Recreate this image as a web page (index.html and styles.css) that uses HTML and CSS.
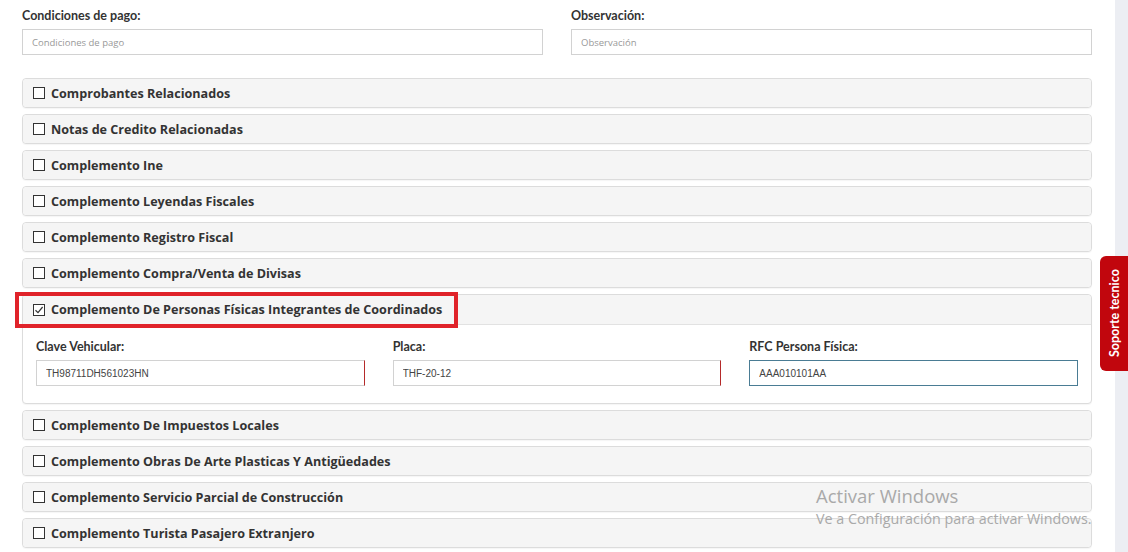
FILE: index.html
```html
<!DOCTYPE html>
<html lang="es">
  <head>
    <meta charset="UTF-8" />
    <title>Complementos</title>
    <link rel="stylesheet" href="styles.css">
  </head>
  <body>
    <div class="page">
      <!-- Payment terms / notes -->
      <div class="row-two">
        <div class="field">
          <label>Condiciones de pago:</label>
          <input type="text" placeholder="Condiciones de pago">
        </div>
        <div class="field">
          <label>Observación:</label>
          <input type="text" placeholder="Observación">
        </div>
      </div>

      <!-- Complement panels -->
      <div class="panels">
        <div class="panel"><div class="panel-head"><span class="check"></span>Comprobantes Relacionados</div></div>
        <div class="panel"><div class="panel-head"><span class="check"></span>Notas de Credito Relacionadas</div></div>
        <div class="panel"><div class="panel-head"><span class="check"></span>Complemento Ine</div></div>
        <div class="panel"><div class="panel-head"><span class="check"></span>Complemento Leyendas Fiscales</div></div>
        <div class="panel"><div class="panel-head"><span class="check"></span>Complemento Registro Fiscal</div></div>
        <div class="panel"><div class="panel-head"><span class="check"></span>Complemento Compra/Venta de Divisas</div></div>
        <div class="panel open">
          <div class="panel-head">
            <span class="highlight"></span>
            <span class="check checked">
              <svg viewBox="0 0 12 12" width="12" height="12"><path d="M2.5 6.2 L5 8.6 L9.6 3" fill="none" stroke="#333" stroke-width="1.2"/></svg>
            </span>Complemento De Personas Físicas Integrantes de Coordinados
          </div>
          <div class="panel-body">
            <div class="field">
              <label>Clave Vehicular:</label>
              <input type="text" class="invalid" value="TH98711DH561023HN">
            </div>
            <div class="field">
              <label>Placa:</label>
              <input type="text" class="invalid" value="THF-20-12">
            </div>
            <div class="field">
              <label>RFC Persona Física:</label>
              <input type="text" class="focused" value="AAA010101AA">
            </div>
          </div>
        </div>
        <div class="panel"><div class="panel-head"><span class="check"></span>Complemento De Impuestos Locales</div></div>
        <div class="panel"><div class="panel-head"><span class="check"></span>Complemento Obras De Arte Plasticas Y Antigüedades</div></div>
        <div class="panel"><div class="panel-head"><span class="check"></span>Complemento Servicio Parcial de Construcción</div></div>
        <div class="panel"><div class="panel-head"><span class="check"></span>Complemento Turista Pasajero Extranjero</div></div>
      </div>
    </div>

    <!-- right gutter + support tab -->
    <div class="gutter"></div>
    <div class="support">Soporte tecnico</div>

    <div class="watermark">
      <div class="wm-title">Activar Windows</div>
      <div class="wm-sub">Ve a Configuración para activar Windows.</div>
    </div>
  </body>
</html>
```

FILE: styles.css
```css
/* Page */
body {
  margin: 0;
  background: #fff;
  font-family: "Lato", "Open Sans", sans-serif;
  color: #333;
  overflow: hidden;
  height: 552px;
}

.page {
  width: 1070px;
  padding: 8px 0 0 22px;
}

/* Top two inputs */
.row-two {
  display: grid;
  grid-template-columns: 1fr 1fr;
  gap: 28px;
}

.field {
  display: flex;
  flex-direction: column;
}

.field label {
  font-size: 12.5px;
  font-weight: bold;
  color: #333;
  height: 15px;
  line-height: 15px;
  margin-bottom: 6px;
}

.field input {
  height: 26px;
  box-sizing: border-box;
  border: 1px solid #d2d2d2;
  padding: 0 9px;
  font-family: "Liberation Sans", Arial, sans-serif;
  font-size: 10px;
  color: #444;
  outline: none;
  background: #fff;
}

.row-two .field input {
  font-family: "Open Sans", sans-serif;
  font-size: 9.5px;
}

.field input::placeholder {
  color: #999;
}

/* Panels */
.panels {
  margin-top: 23px;
  display: flex;
  flex-direction: column;
  gap: 6px;
}

.panel {
  border: 1px solid #dcdcdc;
  border-radius: 4px;
  background: #fff;
  box-shadow: 0 1px 1px rgba(0, 0, 0, 0.04);
}

.panel-head {
  position: relative;
  height: 28px;
  display: flex;
  align-items: center;
  padding-left: 10px;
  background: #f5f5f5;
  border-radius: 4px;
  font-family: "Open Sans", sans-serif;
  font-size: 12.6px;
  font-weight: bold;
  color: #333;
}

.panel.open .panel-head {
  height: 29px;
  border-bottom: 1px solid #e2e2e2;
  border-radius: 4px 4px 0 0;
}

.check {
  width: 10px;
  height: 10px;
  border: 1px solid #333;
  margin-right: 6px;
  display: inline-flex;
  align-items: center;
  justify-content: center;
  background: #fff;
}

.check svg {
  flex: none;
}

/* red highlight box around the selected header */
.highlight {
  position: absolute;
  left: -8px;
  top: -3px;
  width: 435px;
  height: 28px;
  border: 4px solid #e0232a;
  pointer-events: none;
}

.panel-body {
  display: grid;
  grid-template-columns: 1fr 1fr 1fr;
  gap: 28px;
  padding: 14px 13px 17px 13px;
}

.panel-body input.invalid {
  border-right: 1px solid #b52a2a;
}

.panel-body input.focused {
  border-color: #4a7c94;
}

/* Right gutter and support tab */
.gutter {
  position: absolute;
  top: 0;
  right: 0;
  width: 13px;
  height: 552px;
  background: #eceef3;
}

.support {
  position: absolute;
  right: 0;
  top: 256px;
  width: 28px;
  height: 115px;
  background: #c1060d;
  color: #fff;
  font-size: 12.5px;
  font-weight: bold;
  writing-mode: vertical-rl;
  transform: rotate(180deg);
  display: flex;
  align-items: center;
  justify-content: center;
  border-radius: 0 6px 6px 0;
}

/* Windows activation watermark */
.watermark {
  position: absolute;
  left: 816px;
  top: 485px;
  color: #a9a9a9;
  font-family: "Open Sans", "Noto Sans", sans-serif;
  pointer-events: none;
}

.wm-title {
  font-size: 18.5px;
  line-height: 22px;
}

.wm-sub {
  font-size: 14.3px;
  line-height: 18px;
  margin-top: 3px;
}
```
